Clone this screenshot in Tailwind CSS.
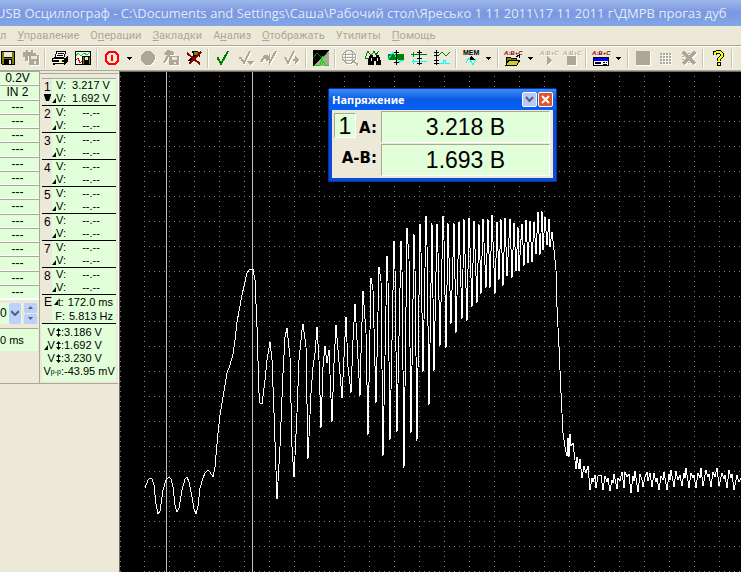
<!DOCTYPE html>
<html lang="ru">
  <head>
    <meta charset="UTF-8" />
    <meta name="viewport" content="width=device-width,initial-scale=1" />
    <title>USB Осциллограф</title>
    <script src="https://cdn.jsdelivr.net/npm/@tailwindcss/browser@4"></script>
  </head>
  <body class="h-screen flex flex-col overflow-hidden bg-[#ece9d8] text-black font-['Liberation_Sans',sans-serif]">
    <!-- Title bar -->
    <header class="h-[26px] shrink-0 flex items-center overflow-hidden bg-linear-to-b from-[#9db9eb] via-[#7a96df] to-[#82a9e8]">
      <h1 class="-ml-1 whitespace-nowrap text-[13px] leading-5 font-medium text-[#e0eafb] font-['Open_Sans',sans-serif]">USB Осциллограф - C:\Documents and Settings\Саша\Рабочий стол\Яресько 1 11 2011\17 11 2011 г\ДМРВ прогаз дуб</h1>
    </header>

    <!-- Menu -->
    <nav class="h-[19px] shrink-0 flex items-center gap-[11px] whitespace-nowrap text-[11px] leading-4 text-[#aca899] font-['Roboto',sans-serif]">
      <button>л</button>
      <button><u>У</u>правление</button>
      <button>О<u>п</u>ерации</button>
      <button><u>З</u>акладки</button>
      <button>А<u>н</u>ализ</button>
      <button><u>О</u>тображать</button>
      <button>Утилиты</button>
      <button><u>П</u>омощь</button>
    </nav>

    <!-- Toolbar -->
    <div id="toolbar" class="h-[25px] shrink-0 flex items-center border-t border-[#aca899] shadow-[inset_0_1px_0_#fff] -ml-1"></div>

    <main class="flex-1 min-h-0 flex border-t border-[#aca899]">
      <!-- Channel settings -->
      <aside class="w-10 shrink-0 text-center text-[12px] leading-[13px]">
        <div class="border-r border-b border-[#aca899] h-[313px] flex flex-col">
          <div id="inputs" class="h-[229px] flex flex-col border-b border-white"></div>
          <div class="h-6 mt-px flex items-center gap-[2px]">
            <label for="scale" class="sr-only">Scale</label>
            <div class="relative w-[22px] h-[21px] bg-[#e1ffd9]">
              <select id="scale" class="appearance-none w-full h-full text-[12px] outline-none">
                <option>0</option>
              </select>
              <span class="pointer-events-none absolute right-px top-0 w-3 h-[21px] rounded-xs bg-[#bdd0fb] flex items-center justify-center">
                <svg width="8" height="6"><path d="M0 1l4 4 4-4" fill="none" stroke="#4d6185" stroke-width="2" /></svg>
              </span>
            </div>
            <div class="flex flex-col gap-px">
              <button aria-label="Up" class="w-[13px] h-[10px] rounded-xs bg-[#bdd0fb] flex items-center justify-center">
                <svg width="5" height="3"><path d="M0 3L2.500 0 5 3z" fill="#4d6185" /></svg>
              </button>
              <button aria-label="Down" class="w-[13px] h-[10px] rounded-xs bg-[#bdd0fb] flex items-center justify-center">
                <svg width="5" height="3"><path d="M0 0l2.500 3L5 0z" fill="#4d6185" /></svg>
              </button>
            </div>
          </div>
          <div class="mt-[3px] mr-px h-[23px] border-t border-[#aca899] bg-[#e1ffd9] text-left text-[11px] leading-[22px]">0 ms</div>
        </div>
      </aside>

      <!-- Measurements -->
      <aside class="w-[79px] shrink-0 text-[11px] leading-[13px]">
        <div class="mt-[2px] h-[311px] px-[2px] pt-1 border-t border-b border-r border-b-[#aca899] border-t-[#aca899] border-r-[#fff]">
          <div class="border-t border-[#aca899]">
            <div id="channels"></div>
            <div class="h-[29px] flex border-b border-black">
              <span class="w-[10px] pl-[2px] pt-px text-[12px]">E</span>
              <div class="flex-1 bg-[#e1ffd9] text-right whitespace-nowrap pr-[3px]">
                <p class="flex justify-end gap-1 h-[14px] pt-px"><span class="flex items-center"><svg width="4" height="5"><path d="M0 5h4V0z" /></svg>t:</span><span>172.0 ms</span></p>
                <p class="flex justify-end gap-1 h-[14px] pt-px"><span>F:</span><span>5.813 Hz</span></p>
              </div>
            </div>
            <div id="stats" class="h-[57px] bg-[#e1ffd9] pt-[2px] whitespace-nowrap"></div>
          </div>
        </div>
      </aside>

      <!-- Scope screen -->
      <section class="relative flex-1 min-w-0 bg-black border-l border-t border-[#716f64]">
        <svg class="absolute inset-0 w-full h-full" shape-rendering="crispEdges">
          <defs>
            <pattern id="grid" x="144" y="96" width="25" height="25" patternUnits="userSpaceOnUse">
              <path d="M0 0h1v1h-1zM5 0h1v1h-1zM10 0h1v1h-1zM15 0h1v1h-1zM20 0h1v1h-1zM0 5h1v1h-1zM0 10h1v1h-1zM0 15h1v1h-1zM0 20h1v1h-1z" fill="#808080" />
            </pattern>
          </defs>
          <g transform="translate(-120 -72)">
            <rect x="144" y="72" width="4000" height="4000" fill="url(#grid)" />
            <path d="M120.500 76V4000" stroke="#808080" stroke-dasharray="1 4" />
            <path d="M166.500 72V4000M252.500 72V4000" stroke="#c0c0c0" />
            <polyline
              fill="none"
              stroke="#fff"
              points="145,488 148,480 150,478 152,479 154,485 156,504 158,514 160,511 163,490 166,480 169,477 171,479 173,487 175,505 177,512 179,508 182,490 185,479 187,477 189,482 192,497 194,509 196,514 198,506 200,488 203,478 205,473 208,470 210,472 213,477 215,467 218,433 220,415 223,397 227,373 230,365 233,354 235,340 237,322 242,295 247,273 250,269 253,269 255,280 257,327 259,393 260,403 262,404 265,380 267,360 270,342 272,360 274,413 277,499 280,447 283,373 285,337 287,328 290,357 292,447 294,477 297,413 299,360 302,330 303,324 306,347 308,459 311,393 313,367 315,353 317,327 319,360 321,428 323,367 325,346 327,363 329,350 332,422 334,363 336,325 338,350 342,398 344,357 346,317 348,367 351,393 353,340 355,304 357,340 360,396 361,353 363,291 366,333 368,435 371,278 373,290 376,403 379,267 381,281 383,456 387,256 388,281 390,440 394,241 395,269 397,432 401,241 402,270 404,468 407,228 409,259 411,433 414,234 415,269 417,441 420,224 421,252 423,372 426,216 427,245 429,405 432,223 434,371 437,224 438,252 440,346 443,216 444,240 446,348 448,223 451,324 454,223 456,333 459,222 462,319 464,219 467,321 469,218 472,307 474,221 477,303 479,224 481,294 483,219 486,288 488,219 490,288 492,215 495,294 497,222 499,280 501,219 503,286 505,218 507,276 510,219 512,278 514,223 516,271 518,227 519,271 522,224 524,266 526,220 528,263 530,221 532,262 534,222 536,254 538,212 540,255 542,211 543,250 545,217 547,245 549,219 550,247 552,232 554,250 556,270 557,307 559,347 561,393 563,433 565,447 567,456 568,438 569,457 570,434 571,446 573,443 576,469 577,457 579,469 580,459 582,478 584,466 586,473 588,466 590,490 592,478 593,482 595,475 596,488 598,476 601,475 603,490 605,476 607,482 608,478 610,491 612,480 613,483 614,474 617,489 618,478 620,481 622,472 624,488 625,472 627,477 629,474 631,493 633,476 634,481 635,471 638,492 640,474 642,480 643,487 645,477 647,472 648,481 650,473 652,487 654,473 656,482 657,478 659,490 661,476 663,480 664,472 667,490 669,474 670,480 671,470 674,487 676,471 678,480 680,475 682,486 684,473 685,478 686,468 689,488 691,473 693,478 694,475 696,488 698,473 700,478 701,468 703,486 706,470 708,477 709,474 711,487 713,472 715,477 717,468 719,486 722,473 724,479 725,475 727,488 729,470 731,478 732,474 734,490 737,475 739,482 741,478"
            />
          </g>
        </svg>

        <!-- Voltage window -->
        <div class="absolute left-[208px] top-4 w-[229px] p-[3px] pt-0 rounded-t-xs bg-[#0a4bd8] border border-[#0831a0]">
          <div class="h-[21px] flex items-center justify-between bg-linear-to-b from-[#3d8bf5] via-[#0a5be6] to-[#0560f5] -mx-[3px] px-[3px]">
            <h2 class="text-[11px] leading-4 font-bold text-white font-['Noto_Sans',sans-serif]">Напряжение</h2>
            <div class="flex gap-px">
              <button aria-label="Свернуть" class="w-[15px] h-[15px] rounded-xs border border-white bg-[#b8c9f4] flex items-center justify-center">
                <svg width="9" height="7"><path d="M1 1l3.500 4L8 1" fill="none" stroke="#4d6185" stroke-width="2" /></svg>
              </button>
              <button aria-label="Закрыть" class="w-[15px] h-[15px] rounded-xs border border-white bg-[#dc5430] flex items-center justify-center">
                <svg width="9" height="9"><path d="M1 1l7 7M8 1L1 8" stroke="#fff" stroke-width="2" /></svg>
              </button>
            </div>
          </div>
          <div class="bg-[#ece9d8] grid grid-cols-[47px_1fr] gap-x-[2px] gap-y-px pt-px pb-[2px] pr-[3px] text-[23px]">
            <div class="flex items-start justify-between pl-[2px] pt-[2px] pr-[2px]">
              <span class="w-[22px] h-[25px] text-center leading-6 bg-[#e1ffd9] border border-t-[#aca899] border-l-[#aca899] border-white">1</span>
              <b class="pt-[5px] text-[15px] leading-5 font-['DejaVu_Sans',sans-serif]">A:</b>
            </div>
            <output class="h-8 text-center leading-[31px] bg-[#e1ffd9] border border-t-[#aca899] border-l-[#aca899] border-white">3.218 В</output>
            <b class="pt-1 pr-[2px] text-right text-[15px] leading-5 font-['DejaVu_Sans',sans-serif]">A-B:</b>
            <output class="h-8 text-center leading-[31px] bg-[#e1ffd9] border border-t-[#aca899] border-l-[#aca899] border-white">1.693 В</output>
          </div>
        </div>
      </section>
    </main>

    <script>
      // Toolbar icons, 18x18 each
      const ABC = (c) => `<text x="0" y="6" font-size="6" font-weight="bold" font-style="italic" fill="${c}">A:B+C</text>`;
      const ICONS = {
        save: `<path d="M2 2h14v14H3l-1-1z" fill="#000"/><path d="M3 3h2v6h8V3h2v12H3z" fill="#808000"/><path d="M5 3h8v5H5z" fill="#ece9d8"/><path d="M5 10h8v5H5z" fill="#000"/><path d="M10 11h2v4h-2z" fill="#ece9d8"/>`,
        saveAll: `<path d="M1 3h3V1h2v2h3V1h2v3h3v3H6v5H3V8H1z" fill="#aca899"/><path d="M7 6h10v10H7z" fill="#aca899"/><path d="M9 7h6v3H9zM12 12h2v3h-2z" fill="#ece9d8"/>`,
        print: `<path d="M6 2h9l-2 6H4z" fill="#fff" stroke="#000"/><path d="M7 4h6M6 6h6" stroke="#000"/><path d="M1 9h13l3-3v7l-4 3H2z" fill="#000"/><path d="M2 10h11M2 13h11" stroke="#fff"/><path d="M8 11h3v2H8z" fill="#ff0"/><path d="M4 15h9" stroke="#ece9d8"/>`,
        waveSave: `<path d="M1 2h16v14H1z" fill="#fff"/><path d="M1.500 2.500h15v13h-15z" fill="none" stroke="#000"/><path d="M2 7l2-3 3 3 3-3 3 2 3-3" fill="none" stroke="#0d0"/><path d="M2 11l2-2 2 5 2-2" fill="none" stroke="red"/><path d="M8 7h9v9H8z" fill="#000"/><path d="M9 8h1v7h-1zM15 8h1v7h-1z" fill="#808000"/><path d="M11 8h3v3h-3z" fill="#ece9d8"/>`,
        power: `<path d="M6 3h6l3 3v6l-3 3H6l-3-3V6z" fill="none" stroke="red" stroke-width="2"/><path d="M9 6v6" stroke="red" stroke-width="2"/>`,
        dot: `<circle cx="9" cy="9" r="7" fill="#aca899"/>`,
        handSave: `<path d="M1 5l5-4 6 2v3H8L3 14H1l4-8z" fill="#aca899"/><path d="M7 7h10v9H7z" fill="#aca899"/><path d="M10 8h5v3h-5zM12 13h2v2h-2z" fill="#ece9d8"/>`,
        cross: `<path d="M7 2h5l3 2v4l-3-1-5 5H2l6-6z" fill="#000"/><path d="M9 3h4v3H9z" fill="#808000"/><path d="M2 4l13 11M16 3L4 15" stroke="#8b0000" stroke-width="2"/>`,
        check: `<path d="M4 9l3 6 7-13" fill="none" stroke="#008000" stroke-width="2"/><path d="M3 8h2v3H3z" fill="#008000"/>`,
        checkDown: `<path d="M2 9h2l3 5 6-12" fill="none" stroke="#aca899" stroke-width="2"/><path d="M9 12h8l-4 4z" fill="#aca899"/>`,
        checkUp: `<path d="M1 13l4-6 2 4 2-3 1 5 6-11" fill="none" stroke="#aca899" stroke-width="2"/><path d="M3 6h5v5z" fill="#aca899"/>`,
        checkNext: `<path d="M2 8l3 6 6-12M10 11h4" fill="none" stroke="#aca899" stroke-width="2"/><path d="M12 7l5 4-5 4z" fill="#aca899"/>`,
        contrast: `<path d="M1 1h16v16H1z" fill="#000"/><path d="M17 1v16H1z" fill="#aca899"/><path d="M1 9l4-5 5 5 5-5" fill="none" stroke="#008000"/><path d="M2 16h6l2-6 3 6h4" fill="none" stroke="#0d0"/><path d="M10 7v9" stroke="#0f0"/>`,
        globe: `<circle cx="8" cy="8" r="6.500" fill="none" stroke="#aca899"/><path d="M2 8h13M3 5h10M3 11h10M5 2l-1 6 1 6M11 2l1 6-1 6" fill="none" stroke="#aca899"/><path d="M12 12l5 4" stroke="#aca899" stroke-width="2"/>`,
        find: `<path d="M1 9l3-7 3 5 3-5 2 4 3-4" fill="none" stroke="#008000"/><path d="M1 9h5" stroke="#008000"/><path d="M6 6h3v2h3V6h3l2 6v4h-5v-4h-2v4H4v-4z" fill="#000"/><path d="M7 9v3M13 9v3" stroke="#ece9d8"/>`,
        markX: `<path d="M1 5h16v6H1z" fill="#008000"/><path d="M1 11l3-5 2-3 3 5 3 6 2-3 3 0" fill="none" stroke="#0ff"/><path d="M9 1v15M7 3h5M7 13h5" stroke="#000"/>`,
        markY: `<path d="M1 5.500h16M3.500 3v5" stroke="#008000"/><path d="M2 12.500h15M3.500 10v5" stroke="#0ff"/><path d="M9.500 1v15M7 3.500h5M7 9.500h5M7 14.500h5" stroke="#000"/>`,
        levels: `<path d="M3.500 1v15M1 3.500h5M1 6.500h5M1 11.500h5M1 14.500h5" stroke="#000"/><path d="M6 6l3-3 4 4 4-4" fill="none" stroke="#008000"/><path d="M6 14h4v-3h2v3h5" fill="none" stroke="#0ff"/>`,
        mem: `<text x="1" y="6" font-size="7" font-weight="bold" fill="#000">MEM</text><path d="M9 7l4 4H5z" fill="#000"/><path d="M4 14l3-5 4 7 3-6" fill="none" stroke="#0ff"/>`,
        open: ABC("#8b0000") + `<path d="M2 8h4l1 1h5v2h4l-4 5H2z" fill="#808000" stroke="#000"/><path d="M5 11h11l-3 5H2z" fill="#cc3" stroke="#000"/><path d="M12 8l3-2v3" fill="none" stroke="#000"/>`,
        play: ABC("#aca899") + `<path d="M7 7l5 4-5 5z" fill="#aca899"/>`,
        stop: ABC("#aca899") + `<path d="M4 7h9v9H4z" fill="#aca899"/>`,
        panel: ABC("#8b0000") + `<path d="M1 8h16v9H1z" fill="#000"/><path d="M2 9h14v3H2z" fill="#00f"/><path d="M2 12h14v4H2z" fill="#fff"/><path d="M3 13h6v2H3zM11 13h2v1h-2zM14 13h1v1h-1zM11 15h4v1h-4z" fill="#000"/>`,
        block: `<path d="M2 2h14v14H2z" fill="#aca899"/>`,
        grid: `<path d="M3 4.500h12M3 7.500h12M3 10.500h12M3 13.500h12" stroke="#aca899" stroke-width="2" stroke-dasharray="2 1"/>`,
        gridOff: `<path d="M2 4.500h13M2 7.500h12M2 10.500h12M2 13.500h13" stroke="#aca899" stroke-dasharray="2 1"/><path d="M3 3l12 12M15 3L3 15" stroke="#aca899" stroke-width="3"/>`,
        help: `<path d="M6 6V4l2-1h3l2 2v2l-3 3v2" fill="none" stroke="#000" stroke-width="4"/><path d="M8 13h4v4H8z" fill="#000"/><path d="M6 6V4l2-1h3l2 2v2l-3 3v2" fill="none" stroke="#ff0" stroke-width="2"/><path d="M9 14h2v2H9z" fill="#ff0"/>`,
      };
      const OFF = ["saveAll", "dot", "handSave", "checkDown", "checkUp", "checkNext", "globe", "play", "stop", "block", "grid", "gridOff"];
      const BAR =
        "save saveAll | print waveSave | power v dot handSave cross | check checkDown checkUp checkNext | contrast | globe find markX markY levels | mem v | open v play stop | panel v | block grid gridOff | help |";

      document.getElementById("toolbar").innerHTML = BAR.split(" ")
        .map((name) => {
          if (name === "|")
            return `<i class="w-[6px] shrink-0 flex justify-center"><i class="w-[2px] h-[19px] bg-[#c9c5b2] border-r border-white"></i></i>`;
          if (name === "v")
            return `<button aria-label="menu" class="w-[13px] shrink-0 flex justify-center"><svg width="5" height="3" shape-rendering="crispEdges"><path d="M0 0h5L2.500 3z"/></svg></button>`;
          const shadow = OFF.includes(name) ? "drop-shadow-[1px_1px_0_#fff]" : "";
          return `<button aria-label="${name}" class="w-[23px] shrink-0 flex justify-center"><svg width="18" height="18" class="overflow-visible ${shadow}" shape-rendering="crispEdges">${ICONS[name]}</svg></button>`;
        })
        .join("");

      // Channel inputs
      const inputs = ["0.2V", "IN 2"].concat(Array(14).fill("---"));
      document.getElementById("inputs").innerHTML = inputs
        .map(
          (t) =>
            `<div class="flex-1 pr-1 border-t border-[#aca899] bg-[#e1ffd9] shadow-[inset_0_-1px_0_#fff]">${t}</div>`
        )
        .join("");

      const DELTA = `<svg width="4" height="5" class="mt-1"><path d="M0 5h4V0z"/></svg>`;

      // Channel measurements
      document.getElementById("channels").innerHTML = [1, 2, 3, 4, 5, 6, 7, 8]
        .map(
          (n) => `
        <div class="h-[27px] flex border-b border-black">
          <div class="w-[10px] pl-[2px] pt-[2px] text-[12px]">${n}${
            n === 1 ? '<svg width="7" height="8"><path d="M0 0h7v1L5 7H2L0 1z"/></svg>' : ""
          }</div>
          <div class="flex-1 bg-[#e1ffd9]">
            <p class="flex"><span class="w-[14px] text-right">V:</span><span class="flex-1 text-center">${n === 1 ? "3.217 V" : "--.--"}</span></p>
            <p class="flex"><span class="w-[14px] flex justify-end items-center">${DELTA}V:</span><span class="flex-1 text-center">${n === 1 ? "1.692 V" : "--.--"}</span></p>
          </div>
        </div>`
        )
        .join("");

      // Cursor statistics
      const ARROW = `<svg width="5" height="9" class="ml-px"><path d="M2.500 0L5 3H0zM2.500 9L0 6h5zM2 2h1v5H2z"/></svg>`;
      const stats = [
        ["V" + ARROW, "3.186 V"],
        [DELTA + "V" + ARROW, "1.692 V"],
        ["V" + ARROW, "3.230 V"],
        ['V<span class="text-[7px]">p-p</span>', "-43.95 mV"],
      ];
      document.getElementById("stats").innerHTML = stats
        .map(([k, v]) => `<p class="flex h-[13px]"><span class="w-[22px] flex justify-end items-center">${k}:</span><span>${v}</span></p>`)
        .join("");
    </script>
  </body>
</html>
